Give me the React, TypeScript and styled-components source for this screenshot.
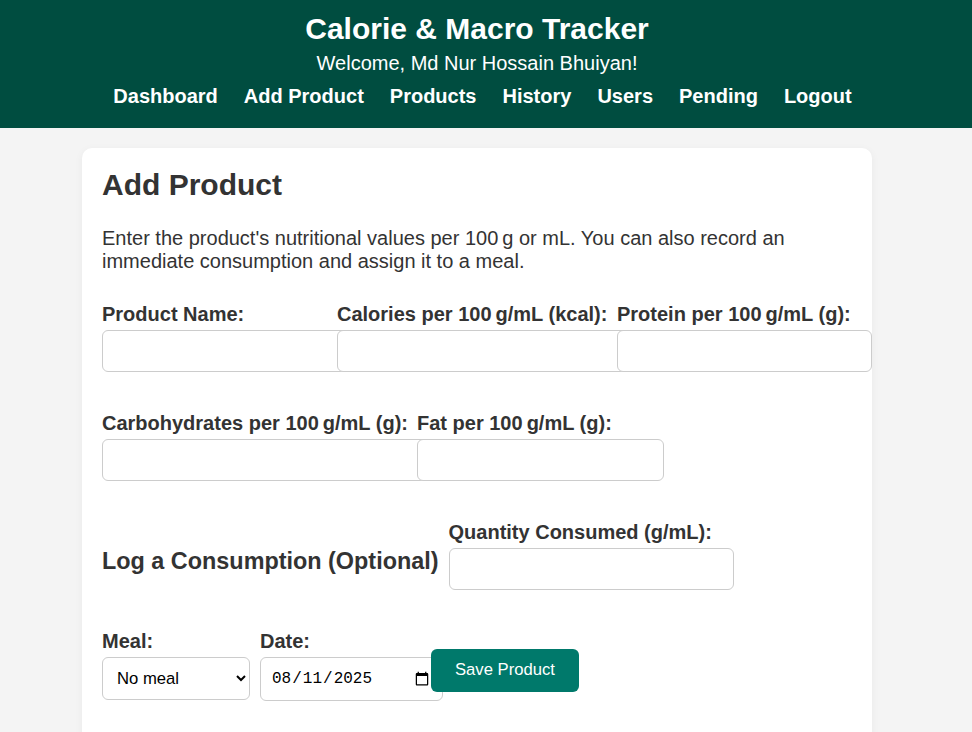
import React from "react";
import styled, { createGlobalStyle } from "styled-components";

const GlobalStyle = createGlobalStyle`
  html, body { margin: 0; padding: 0; }
  body {
    background: #f4f4f4;
    font-family: "Liberation Sans", Arial, sans-serif;
    font-size: 20px;
    color: #333;
  }
`;

const Header = styled.header`
  background: #004d40;
  color: #fff;
  text-align: center;
  padding: 11px 18px 20px 0;
`;

const Title = styled.h1`
  margin: 0 0 6px;
  font-size: 30px;
  line-height: 35px;
  font-weight: bold;
`;

const Welcome = styled.p`
  margin: 0 0 10px;
  font-size: 20px;
  line-height: 23px;
`;

const Nav = styled.nav`
  display: flex;
  justify-content: center;
  gap: 26px;
  padding-left: 11px;
`;

const NavLink = styled.a`
  color: #fff;
  font-weight: bold;
  font-size: 20px;
  line-height: 23px;
  text-decoration: none;
`;

const Main = styled.main`
  padding: 20px 18px 40px 0;
`;

const Card = styled.section`
  box-sizing: border-box;
  width: 790px;
  margin: 0 auto;
  background: #fff;
  border-radius: 10px;
  padding: 19px 20px 40px;
  box-shadow: 0 2px 8px rgba(0, 0, 0, 0.05);
`;

const Heading = styled.h2`
  margin: 0 0 25px;
  font-size: 30px;
  line-height: 35px;
  font-weight: bold;
`;

const Intro = styled.p`
  margin: 0 0 28px;
  font-size: 20px;
  line-height: 23px;
`;

const Form = styled.form`
  display: flex;
  flex-wrap: wrap;
  align-items: center;
  column-gap: 10px;
  row-gap: 25px;
`;

const Field = styled.div<{ $w: number }>`
  display: flex;
  flex-direction: column;
  flex: none;
  width: ${(p) => p.$w}px;
`;

const Label = styled.label`
  font-weight: bold;
  font-size: 20px;
  line-height: 23px;
  padding-top: 2px;
  margin-bottom: 4px;
  white-space: nowrap;
`;

const TextInput = styled.input`
  box-sizing: content-box;
  width: 100%;
  padding: 10px;
  margin: 0 0 13px;
  border: 1px solid #ccc;
  border-radius: 6px;
  background: #fff;
  font-family: "Liberation Sans", Arial, sans-serif;
  font-size: 16.67px;
  line-height: 20px;
  height: 20px;
  color: #000;
`;

const DateInput = styled(TextInput)`
  height: 22px;
  line-height: 22px;
  margin-bottom: 11px;
  font-family: "Liberation Mono", "Courier New", monospace;
  font-size: 16px;
`;

const Select = styled.select`
  box-sizing: border-box;
  width: 100%;
  height: 43px;
  padding: 0 6px 0 10px;
  margin: 0 0 12px;
  border: 1px solid #ccc;
  border-radius: 6px;
  background: #fff;
  color: #000;
  font-family: "Liberation Sans", Arial, sans-serif;
  font-size: 16.67px;
`;

const Section = styled.h3`
  margin: 23px 0;
  font-size: 23.4px;
  line-height: 27px;
  font-weight: bold;
  white-space: nowrap;
`;

const SaveButton = styled.button`
  flex: none;
  height: 43px;
  padding: 0 24px;
  border: none;
  border-radius: 6px;
  background: #00796b;
  color: #fff;
  font-family: "Liberation Sans", Arial, sans-serif;
  font-size: 16.67px;
  cursor: pointer;
`;

const NB = "\u202F";

export default function App() {
  const links = ["Dashboard", "Add Product", "Products", "History", "Users", "Pending", "Logout"];
  return (
    <>
      <GlobalStyle />
      <Header>
        <Title>Calorie &amp; Macro Tracker</Title>
        <Welcome>Welcome, Md Nur Hossain Bhuiyan!</Welcome>
        <Nav>
          {links.map((l) => (
            <NavLink key={l} href="#">
              {l}
            </NavLink>
          ))}
        </Nav>
      </Header>
      <Main>
        <Card>
          <Heading>Add Product</Heading>
          <Intro>
            Enter the product's nutritional values per 100{NB}g or mL. You can also record an immediate
            consumption and assign it to a meal.
          </Intro>
          <Form onSubmit={(e) => e.preventDefault()}>
            <Field $w={225}>
              <Label>Product Name:</Label>
              <TextInput type="text" />
            </Field>
            <Field $w={270}>
              <Label>Calories per 100{NB}g/mL (kcal):</Label>
              <TextInput type="number" />
            </Field>
            <Field $w={233}>
              <Label>Protein per 100{NB}g/mL (g):</Label>
              <TextInput type="number" />
            </Field>
            <Field $w={305}>
              <Label>Carbohydrates per 100{NB}g/mL (g):</Label>
              <TextInput type="number" />
            </Field>
            <Field $w={225}>
              <Label>Fat per 100{NB}g/mL (g):</Label>
              <TextInput type="number" />
            </Field>
            <Section>Log a Consumption (Optional)</Section>
            <Field $w={263}>
              <Label>Quantity Consumed (g/mL):</Label>
              <TextInput type="number" />
            </Field>
            <Field $w={148}>
              <Label>Meal:</Label>
              <Select defaultValue="">
                <option value="">No meal</option>
                <option value="breakfast">Breakfast</option>
                <option value="lunch">Lunch</option>
                <option value="dinner">Dinner</option>
                <option value="snack">Snack</option>
              </Select>
            </Field>
            <Field $w={161}>
              <Label>Date:</Label>
              <DateInput type="date" defaultValue="2025-08-11" />
            </Field>
            <SaveButton type="submit">Save Product</SaveButton>
          </Form>
        </Card>
      </Main>
    </>
  );
}
